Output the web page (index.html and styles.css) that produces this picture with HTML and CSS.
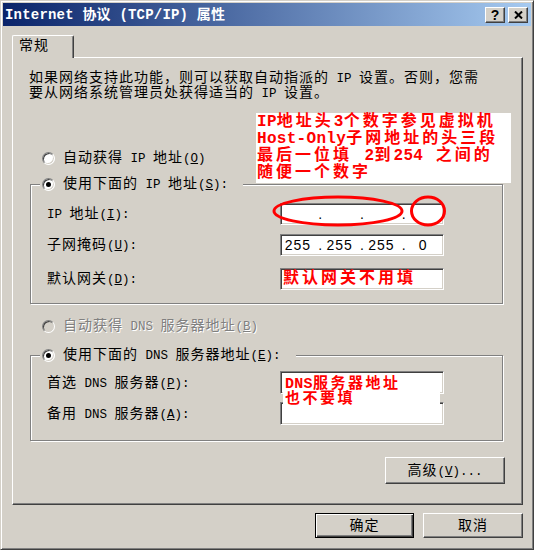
FILE: index.html
```html
<!DOCTYPE html>
<html lang="zh-CN">
<head>
    <meta charset="UTF-8">
    <title>Internet 协议 (TCP/IP) 属性</title>
    <link rel="stylesheet" href="styles.css">
</head>
<body>
    <div class="window">
        <div class="titlebar">
            <span class="title">Internet 协议 (TCP/IP) 属性</span>
            <div class="title-buttons">
                <span class="title-btn help">?</span>
                <span class="title-btn close">
                    <svg width="9" height="8" viewBox="0 0 9 8"><path d="M1 0.5 L8 7.5 M8 0.5 L1 7.5" stroke="#000" stroke-width="2"/></svg>
                </span>
            </div>
        </div>

        <div class="client">
            <div class="tabs">
                <div class="tab">常规</div>
            </div>

            <div class="panel">
                <p class="intro">如果网络支持此功能，则可以获取自动指派的<span class="en"> IP </span>设置。否则，您需<br>要从网络系统管理员处获得适当的<span class="en"> IP </span>设置。</p>

                <div class="radio-row first"><span class="radio"></span><span>自动获得<span class="en"> IP </span>地址<span class="en">(<u>O</u>)</span></span></div>

                <fieldset class="group ip-group">
                    <legend><span class="radio checked"></span><span>使用下面的<span class="en"> IP </span>地址<span class="en">(<u>S</u>):</span></span></legend>
                    <div class="field-row">
                        <span class="label"><span class="en">IP </span>地址<span class="en">(<u>I</u>):</span></span>
                        <div class="field ip-field">
                            <span class="octet"></span><span class="dot">.</span>
                            <span class="octet"></span><span class="dot">.</span>
                            <span class="octet"></span><span class="dot">.</span>
                            <span class="octet"></span>
                            <svg class="circles" width="178" height="33" viewBox="0 0 178 33">
                                <ellipse cx="66" cy="16" rx="64" ry="14" fill="none" stroke="#f00" stroke-width="3"/>
                                <ellipse cx="156" cy="16" rx="16.5" ry="14" fill="none" stroke="#f00" stroke-width="3"/>
                            </svg>
                        </div>
                    </div>
                    <div class="field-row">
                        <span class="label">子网掩码<span class="en">(<u>U</u>):</span></span>
                        <div class="field ip-field">
                            <span class="octet">255</span><span class="dot">.</span>
                            <span class="octet">255</span><span class="dot">.</span>
                            <span class="octet">255</span><span class="dot">.</span>
                            <span class="octet">0</span>
                        </div>
                    </div>
                    <div class="field-row gateway">
                        <span class="label">默认网关<span class="en">(<u>D</u>):</span></span>
                        <div class="field"><span class="red-text">默认网关不用填</span></div>
                    </div>
                </fieldset>

                <div class="radio-row disabled"><span class="radio"></span><span>自动获得<span class="en"> DNS </span>服务器地址<span class="en">(<u>B</u>)</span></span></div>

                <fieldset class="group dns-group">
                    <legend><span class="radio checked"></span><span>使用下面的<span class="en"> DNS </span>服务器地址<span class="en">(<u>E</u>):</span></span></legend>
                    <div class="field-row">
                        <span class="label">首选<span class="en"> DNS </span>服务器<span class="en">(<u>P</u>):</span></span>
                        <div class="field"></div>
                    </div>
                    <div class="field-row">
                        <span class="label">备用<span class="en"> DNS </span>服务器<span class="en">(<u>A</u>):</span></span>
                        <div class="field"></div>
                    </div>
                </fieldset>

                <button class="btn advanced">高级<span class="en">(<u>V</u>)...</span></button>

                <!-- 注释框 -->
                <div class="note note-ip">
                    <span class="lat">IP</span>地址头<span class="lat">3</span>个数字参见虚拟机<br>
                    <span class="lat">Host-Only</span>子网地址的头三段<br>
                    最后一位填 <span class="lat">2</span>到<span class="lat">254</span> 之间的<br>
                    随便一个数字
                </div>
                <div class="note note-dns">
                    <span class="lat">DNS</span>服务器地址<br>
                    也不要填
                </div>
            </div>

            <div class="dialog-buttons">
                <button class="btn default">确定</button>
                <button class="btn cancel">取消</button>
            </div>
        </div>
    </div>
</body>
</html>
```

FILE: styles.css
```css
body {
    margin: 0;
    background: #d4d0c8;
    font-family: "Liberation Mono", "Noto Sans CJK SC", monospace;
    font-size: 14px;
    line-height: 16px;
    letter-spacing: 1px;
    color: #000;
}

.en {
    font-size: 12.5px;
    line-height: 1;
    letter-spacing: 0;
}

.window {
    width: 534px;
    height: 550px;
    box-sizing: border-box;
    border: 1px solid;
    border-color: #d4d0c8 #404040 #404040 #d4d0c8;
    box-shadow: inset 1px 1px #fff, inset -1px -1px #808080;
    padding: 2px;
    display: flex;
    flex-direction: column;
}

.titlebar {
    height: 23px;
    flex: none;
    display: flex;
    align-items: center;
    justify-content: space-between;
    padding-left: 2px;
    background: linear-gradient(to right, #0a246a, #a6caf0);
}

.title {
    color: #fff;
    font-weight: bold;
    letter-spacing: 0.2px;
    white-space: nowrap;
}

.title-buttons {
    display: flex;
    gap: 3px;
    margin-right: 3px;
}

.title-btn {
    width: 20px;
    height: 16px;
    box-sizing: border-box;
    background: #d4d0c8;
    border: 1px solid;
    border-color: #fff #404040 #404040 #fff;
    box-shadow: inset -1px -1px #808080;
    display: flex;
    align-items: center;
    justify-content: center;
    font: bold 14px "Liberation Sans", sans-serif;
    letter-spacing: 0;
}

.client {
    flex: 1;
    padding: 9px 8px 0 9px;
}

.tabs {
    display: flex;
    height: 22px;
}

.tab {
    position: relative;
    z-index: 1;
    width: 62px;
    height: 23px;
    box-sizing: border-box;
    padding-left: 6px;
    line-height: 21px;
    background: #d4d0c8;
    border-top: 1px solid #fff;
    border-left: 1px solid #fff;
    border-right: 1px solid #404040;
    box-shadow: inset -1px 0 #808080;
    border-top-left-radius: 2px;
    border-top-right-radius: 2px;
}

.panel {
    position: relative;
    height: 448px;
    box-sizing: border-box;
    border: 1px solid;
    border-color: #fff #404040 #404040 #fff;
    box-shadow: inset -1px -1px #808080;
}

.intro {
    height: 30px;
    margin: 13px 0 0 16px;
    line-height: 15px;
    white-space: nowrap;
}

.radio-row {
    display: flex;
    align-items: center;
    gap: 8px;
    height: 16px;
    white-space: nowrap;
}

.radio-row.first {
    margin: 49px 0 0 29px;
}

.radio-row.disabled {
    margin: 14px 0 0 29px;
    color: #808080;
    text-shadow: 1px 1px #fff;
}

.radio {
    position: relative;
    flex: none;
    width: 13px;
    height: 13px;
    box-sizing: border-box;
    border-radius: 50%;
    background: #fff;
    border: 1px solid;
    border-color: #808080 #fff #fff #808080;
    box-shadow: inset 1px 1px #404040, inset -1px -1px #d4d0c8;
}

.disabled .radio {
    background: #d4d0c8;
}

.radio.checked::after {
    content: "";
    position: absolute;
    left: 3px;
    top: 3px;
    width: 5px;
    height: 5px;
    border-radius: 50%;
    background: #000;
}

.group {
    width: 473px;
    box-sizing: border-box;
    margin: 10px 0 0 17px;
    padding: 0 0 13px 0;
    border: 1px solid #808080;
    box-shadow: 1px 1px 0 #fff, inset 1px 1px 0 #fff;
    min-width: 0;
}

.dns-group {
    margin-top: 13px;
    padding-bottom: 16px;
}

.group legend {
    display: flex;
    align-items: center;
    gap: 8px;
    height: 16px;
    margin-left: 9px;
    padding: 0 15px 0 2px;
    background: #d4d0c8;
    white-space: nowrap;
}

.field-row {
    display: grid;
    grid-template-columns: 233px 164px;
    align-items: center;
    height: 22px;
    margin: 9px 0 0 16px;
}

.field-row.gateway {
    margin-top: 12px;
}

.ip-group .field-row:first-of-type {
    margin-top: 11px;
}

.dns-group .field-row:first-of-type {
    margin-top: 8px;
}

.label {
    white-space: nowrap;
}

.field {
    position: relative;
    height: 22px;
    box-sizing: border-box;
    background: #fff;
    border: 1px solid;
    border-color: #808080 #fff #fff #808080;
    box-shadow: inset 1px 1px #404040, inset -1px -1px #d4d0c8;
}

.dns-group .field {
    height: 23px;
}

.ip-field {
    display: flex;
    padding-left: 1px;
    font-family: "Liberation Sans", sans-serif;
    line-height: 20px;
}

.octet {
    flex: 1;
    padding-right: 4px;
    text-align: center;
}

.dot {
    width: 6px;
    text-align: center;
}

.circles {
    position: absolute;
    left: -9px;
    top: -9px;
}

.red-text {
    display: block;
    padding-left: 2px;
    color: #f00;
    font-weight: bold;
    font-size: 16px;
    line-height: 20px;
    letter-spacing: 3px;
    white-space: nowrap;
}

.btn {
    font: inherit;
    letter-spacing: inherit;
    color: #000;
    height: 25px;
    padding: 0;
    background: #d4d0c8;
    border: 1px solid;
    border-color: #fff #404040 #404040 #fff;
    box-shadow: inset -1px -1px #808080;
}

.advanced {
    display: block;
    width: 120px;
    height: 27px;
    margin: 16px 0 0 372px;
}

.dialog-buttons {
    display: flex;
    justify-content: flex-end;
    gap: 9px;
    margin-top: 8px;
}

.btn.default {
    width: 99px;
    border-color: #000;
    box-shadow: inset 1px 1px #fff, inset -1px -1px #404040, inset -2px -2px #808080;
}

.btn.cancel {
    width: 100px;
}

.note {
    position: absolute;
    box-sizing: border-box;
    background: #fff;
    color: #f00;
    font-weight: bold;
    font-size: 16px;
    white-space: nowrap;
}

.note .lat {
    letter-spacing: 0.3px;
}

.note-ip {
    left: 243px;
    top: 55px;
    width: 255px;
    height: 70px;
    padding: 1px 0 0 1px;
    line-height: 17px;
    letter-spacing: 3px;
}

.note-dns {
    left: 270px;
    top: 315px;
    width: 157px;
    height: 31px;
    padding: 4px 0 0 2px;
    font-size: 15px;
    line-height: 15px;
    letter-spacing: 2.5px;
}
```
